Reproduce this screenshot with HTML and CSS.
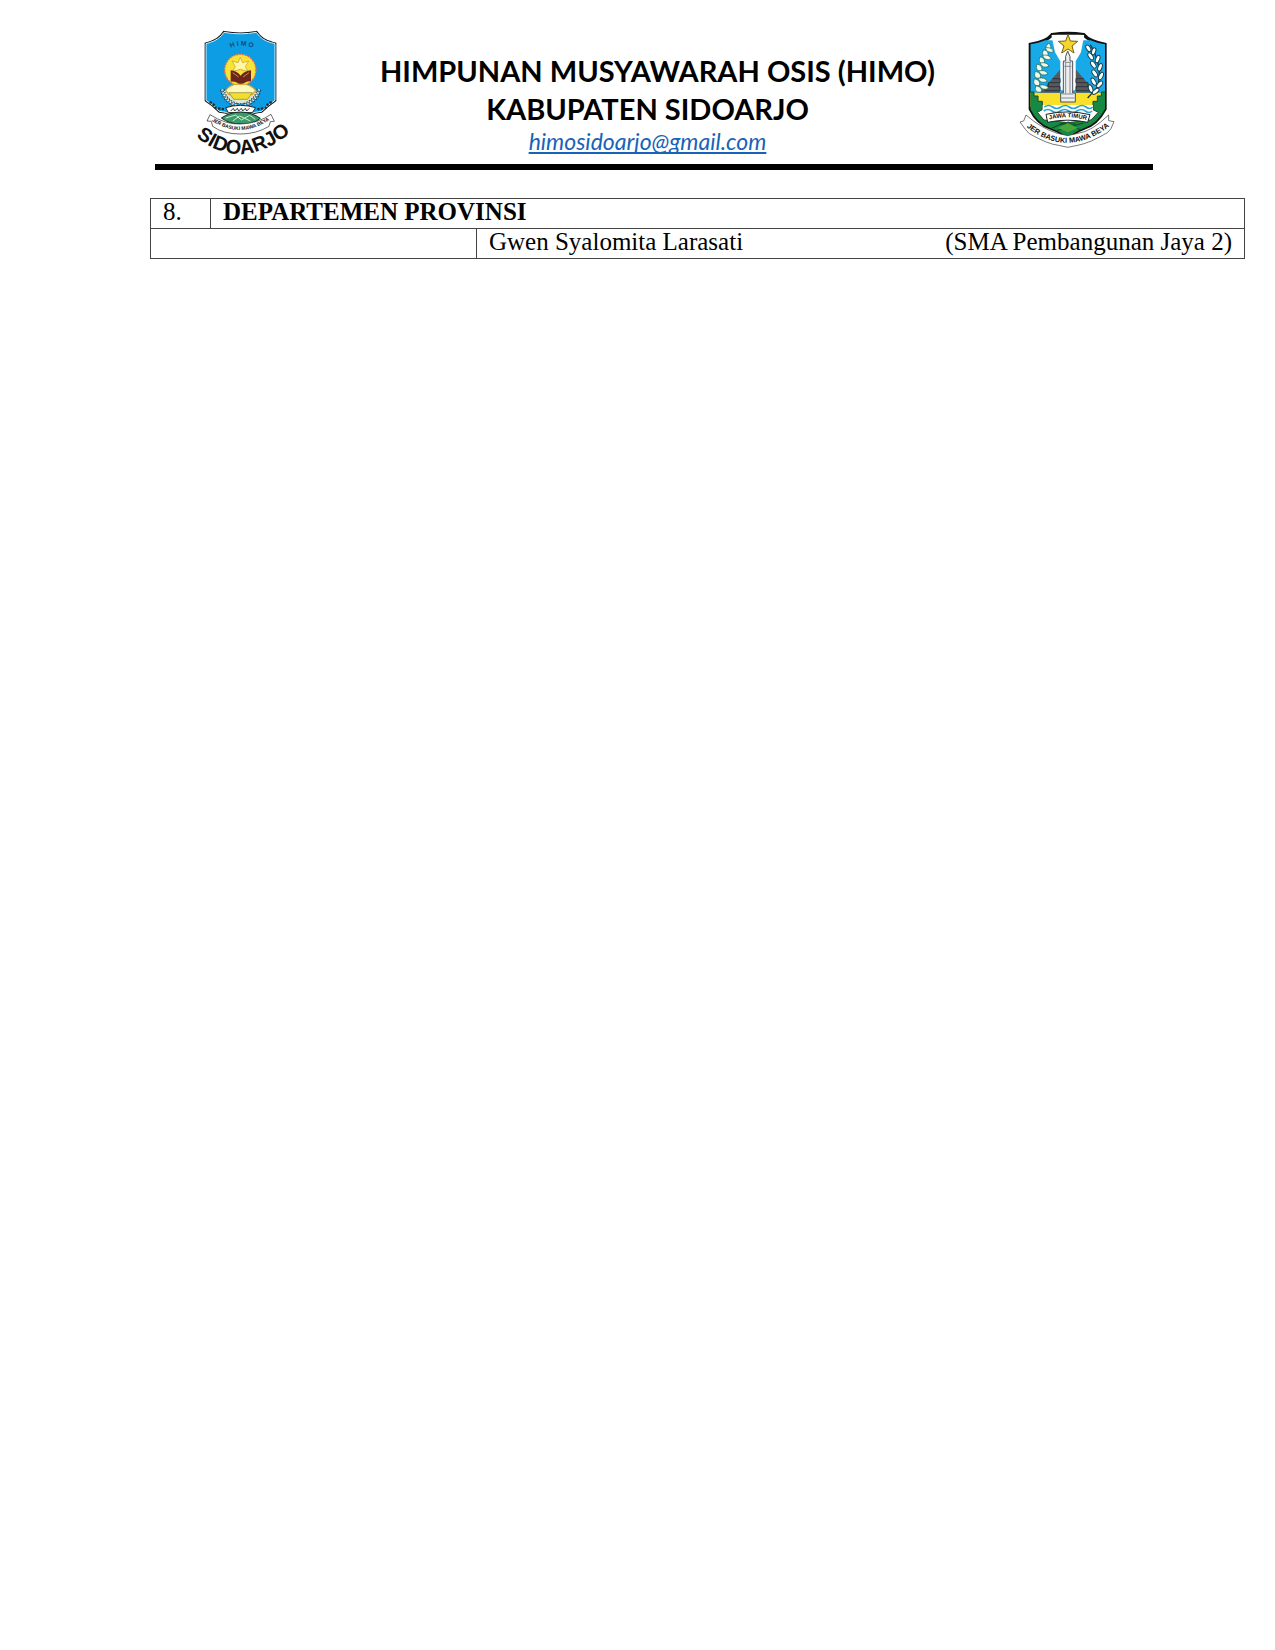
FILE: index.html
```html
<!DOCTYPE html>
<html lang="id">
<head>
<meta charset="utf-8">
<meta name="viewport" content="width=device-width, initial-scale=1">
<title>Himpunan Musyawarah OSIS (HIMO) Kabupaten Sidoarjo</title>
<link rel="stylesheet" href="styles.css">
</head>
<body>
<div class="page">
<header class="letterhead">
  <svg class="crest crest-left" viewBox="0 0 345 405" role="img" aria-label="Lambang Sidoarjo">
    <defs>
      <path id="himo-arc" d="M129 66Q167 46 212 65"/>
      <path id="motto-arc" d="M76 278Q165 341 258 276"/>
      <path id="city-arc" d="M18 316Q165 452 332 304"/>
      <path id="shield-left" d="M73 47Q102 39 117 16Q166 25 214 16Q230 40 259 47L270 50V220Q249 234 230 253Q194 256 166 278Q139 256 103 253Q84 233 63 220V50Z"/>
    </defs>
    <use href="#shield-left" fill="#fff" stroke="#111" stroke-width="8"/>
    <use href="#shield-left" fill="#0c9de4" stroke="#d8f0f8" stroke-width="3"/>
    <text class="himo"><textPath href="#himo-arc" startOffset="50%" text-anchor="middle">H I M O</textPath></text>
    <path d="M113 197Q125 179 143 180L190 180Q208 182 221 198L202 217L188 230H146L130 217Z" fill="#dfe6d5" stroke="#314f4a" stroke-width="3" stroke-dasharray="5 3"/>
    <circle cx="166" cy="129" r="47" fill="#f8e336" stroke="#e46f4e" stroke-width="4" stroke-dasharray="6 3"/>
    <path d="M166 91l7 16 18-5-10 17 8 14-23-6-23 6 8-14-10-17 18 5z" fill="#fff6a8" stroke="#bf9928" stroke-width="2"/>
    <path d="M137 130Q154 131 167 146Q180 131 198 130V163Q180 162 167 177Q155 162 137 164Z" fill="#6b251c"/>
    <path d="M143 137l18 13M192 137l-18 13" stroke="#d18a43" stroke-width="3"/>
    <path d="M122 190Q140 168 166 172Q192 168 212 190L202 203H132Z" fill="#fff8bd" stroke="#d8a52d" stroke-width="4"/>
    <path d="M132 197H202L188 217H146Z" fill="#eee02d" stroke="#8d7a27" stroke-width="2"/>
    <path d="M112 187Q118 223 157 235M222 187Q214 223 176 235" fill="none" stroke="#293e42" stroke-width="14" stroke-dasharray="5 4"/>
    <path d="M112 187Q118 223 157 235M222 187Q214 223 176 235" fill="none" stroke="#eee" stroke-width="7" stroke-dasharray="4 5"/>
    <path d="M74 225q14 5 18 18 15 2 27 4M260 225q-14 5-18 18-15 2-27 4" fill="none" stroke="#172e35" stroke-width="7" stroke-dasharray="7 4"/>
    <path d="M122 242Q166 228 212 242L202 257H130Z" fill="#fff" stroke="#222" stroke-width="3"/>
    <path d="M137 252l8-8 4 8 8-8 4 8 8-8 4 8 8-8 4 8 8-8" fill="none" stroke="#333" stroke-width="3"/>
    <path d="M109 273Q133 256 166 255Q202 256 226 274Q202 294 166 291Q133 291 109 273Z" fill="#3c996b" stroke="#172e25" stroke-width="3"/>
    <path d="M122 273l30-9 17 15 25-14 17 12M143 282l21-15 32 15" fill="none" stroke="#d6ebc9" stroke-width="3"/>
    <path d="M75 263Q122 293 166 291Q218 290 258 262L268 283L256 284L252 298Q214 321 166 321Q114 321 83 298L79 283L66 282Z" fill="#fff" stroke="#222" stroke-width="2"/>
    <text class="motto-left"><textPath href="#motto-arc" startOffset="50%" text-anchor="middle">JER BASUKI MAWA BEYA</textPath></text>
    <text class="city"><textPath href="#city-arc" startOffset="50%" text-anchor="middle">SIDOARJO</textPath></text>
  </svg>
  <div class="heading">
    <h1 class="organisation"><span class="organisation-name">HIMPUNAN MUSYAWARAH OSIS (HIMO)</span><span class="region">KABUPATEN SIDOARJO</span></h1>
    <a class="email" href="mailto:himosidoarjo@gmail.com">himosidoarjo@gmail.com</a>
  </div>
  <svg class="crest crest-right" viewBox="0 0 330 390" role="img" aria-label="Lambang Jawa Timur">
    <defs>
      <path id="shield-right" d="M58 52Q107 44 123 23Q171 16 218 23Q235 44 282 52V246Q258 291 220 303Q188 316 170 333Q151 315 118 303Q79 289 58 246Z"/>
      <clipPath id="shield-clip"><use href="#shield-right"/></clipPath>
      <path id="java-arc" d="M108 279Q169 262 233 281"/>
      <path id="motto-right-arc" d="M42 296Q168 400 300 294"/>
    </defs>
    <use href="#shield-right" fill="#fff" stroke="#111" stroke-width="10"/>
    <g clip-path="url(#shield-clip)">
      <path d="M55 40H285V200H55Z" fill="#18a9e8"/>
      <path d="M121 23H220L210 76L194 103V190H148V103L132 76Z" fill="#fff"/>
      <path d="M55 197H285V240H55Z" fill="#fae02b"/>
      <path d="M87 197L147 128V197ZM195 197V128L255 197Z" fill="#56595e"/>
      <path d="M100 191h47v-12h-35v-12h35v-12h-23M243 191h-48v-12h36v-12h-36v-12h24" fill="none" stroke="#303238" stroke-width="3"/>
      <path d="M55 195h14v12h12v16h13v25l-15 8 20 23 71 8 70-8 22-23-16-8v-25h13v-16h12v-12h14v145H55Z" fill="#168a43" stroke="#164b31" stroke-width="3"/>
      <path d="M95 234H246V262Q171 254 95 262Z" fill="#fff"/>
      <path d="M100 240q13-9 25 0t25 0 25 0 25 0 25 0 20 0M98 252q13-9 25 0t25 0 25 0 25 0 25 0 20 0" fill="none" stroke="#23a6d3" stroke-width="5"/>
      <path d="M117 306l41-18 65 26M217 288l-80 23M146 291h48M171 283v30" fill="none" stroke="#163c23" stroke-width="3"/>
      <path d="M141 303l29-15 31 15-31 13z" fill="#49a63c"/>
    </g>
    <path d="M170 72l7 17v13h8v96h8v27h-44v-27h8v-96h7V88Z" fill="#eceef0" stroke="#4c5053" stroke-width="3"/>
    <path d="M161 106h19M160 118h21M164 105v95M177 105v95M154 201h33M151 213h39" stroke="#858b91" stroke-width="3"/>
    <path d="M171 22l7 20 22 1-17 14 6 21-18-12-19 12 7-21-17-14 22-1z" fill="#f4d52b" stroke="#776014" stroke-width="3"/>
    <g fill="#eefbea" stroke="#195f50" stroke-width="2">
      <path d="M113 48q13 12 1 24-19-6-1-24ZM98 68q18 5 12 20-23 1-12-20ZM88 89q17 6 11 20-22 2-11-20ZM78 111q19 5 14 21-22 2-14-21ZM73 133q21 5 14 21-23 2-14-21ZM70 155q21 5 15 21-23 2-15-21ZM75 176q22 5 15 20-24 1-15-20Z"/>
      <path d="M103 62q21-2 25 13-21 4-25-13ZM94 85q20-4 27 10-19 9-27-10ZM87 108q22-4 27 10-20 8-27-10ZM83 132q21-5 28 9-20 9-28-9ZM81 154q21-5 28 9-20 9-28-9ZM85 175q21-5 28 9-20 9-28-9Z"/>
    </g>
    <path d="M238 53Q276 118 260 180L230 213" fill="none" stroke="#173f49" stroke-width="4"/>
    <g fill="#fff" stroke="#17414a" stroke-width="3">
      <ellipse cx="232" cy="64" rx="6" ry="11" transform="rotate(-30 232 64)"/><ellipse cx="248" cy="73" rx="6" ry="11" transform="rotate(20 248 73)"/>
      <ellipse cx="239" cy="88" rx="6" ry="12" transform="rotate(-35 239 88)"/><ellipse cx="260" cy="96" rx="6" ry="12" transform="rotate(20 260 96)"/>
      <ellipse cx="247" cy="113" rx="6" ry="12" transform="rotate(-35 247 113)"/><ellipse cx="267" cy="121" rx="6" ry="12" transform="rotate(20 267 121)"/>
      <ellipse cx="251" cy="139" rx="6" ry="12" transform="rotate(-35 251 139)"/><ellipse cx="270" cy="147" rx="6" ry="12" transform="rotate(25 270 147)"/>
      <ellipse cx="248" cy="164" rx="6" ry="12" transform="rotate(-30 248 164)"/><ellipse cx="266" cy="172" rx="6" ry="12" transform="rotate(40 266 172)"/>
      <ellipse cx="239" cy="185" rx="6" ry="12" transform="rotate(-20 239 185)"/><ellipse cx="254" cy="193" rx="6" ry="12" transform="rotate(50 254 193)"/>
    </g>
    <path d="M105 262Q170 247 237 263L230 286Q170 273 110 286Z" fill="#fff" stroke="#222" stroke-width="3"/>
    <text class="java"><textPath href="#java-arc" startOffset="50%" text-anchor="middle">JAWA TIMUR</textPath></text>
    <path d="M45 264L38 282L27 285L43 307L55 320Q111 352 143 355L170 361L200 355Q237 348 289 317L300 305L309 284L293 281L293 264Q241 314 201 319L170 326L139 319Q91 304 45 264Z" fill="#fff" stroke="#333" stroke-width="2"/>
    <text class="motto-right"><textPath href="#motto-right-arc" startOffset="50%" text-anchor="middle">JER BASUKI MAWA BEYA</textPath></text>
  </svg>
</header>
<main>
  <table class="members">
    <colgroup><col class="col-number"><col class="col-role"><col><col></colgroup>
    <tbody>
      <tr><td>8.</td><th colspan="3" scope="rowgroup">DEPARTEMEN PROVINSI</th></tr>
      <tr><td colspan="2"></td><td class="member">Gwen Syalomita Larasati</td><td class="school">(SMA Pembangunan Jaya 2)</td></tr>
    </tbody>
  </table>
</main>
</div>
</body>
</html>
```
FILE: styles.css
```css
* { box-sizing: border-box; }

body {
  margin: 0;
  background: #fff;
  color: #000;
  font-family: "Liberation Serif", "Times New Roman", serif;
}

.page { padding: 27px 30px 40px 150px; }

.letterhead {
  display: flex;
  align-items: flex-start;
  margin: 0 92px 28px 5px;
  padding: 0 32px 2px 30px;
  border-bottom: 6px solid #000;
}

.crest { flex: none; display: block; }
.crest-left { width: 115px; height: 135px; }
.crest-right { width: 110px; height: 130px; }
.crest text { font-family: "Liberation Sans", Arial, sans-serif; font-weight: 700; fill: #111; }
.crest .himo { font-size: 20px; fill: #124878; }
.crest .motto-left { font-size: 15px; }
.crest .city { font-size: 60px; }
.crest .java { font-size: 18px; }
.crest .motto-right { font-size: 22px; }

.heading {
  flex: 1;
  padding: 25px 16px 0 0;
  text-align: center;
  font-family: Lato, Carlito, Calibri, sans-serif;
}

.organisation {
  margin: 0;
  font-size: 29px;
  line-height: 38px;
  font-weight: 700;
  white-space: nowrap;
}

.organisation span { display: block; }
.organisation-name { padding-left: 20px; }

.email {
  display: block;
  width: fit-content;
  margin: 0 auto;
  color: #1763b8;
  font-size: 23px;
  line-height: 26px;
  font-style: italic;
  text-decoration: underline;
  text-decoration-skip-ink: none;
  text-underline-offset: 2px;
}

.members {
  width: 100%;
  table-layout: fixed;
  border-collapse: collapse;
  font-size: 25px;
  line-height: 26px;
}

.col-number { width: 60px; }
.col-role { width: 266px; }

.members td,
.members th {
  padding: 0 12px 3px;
  border: 1px solid #444;
  text-align: left;
  white-space: nowrap;
}

.members .member { border-right: 0; }
.members .school { border-left: 0; text-align: right; }
```
